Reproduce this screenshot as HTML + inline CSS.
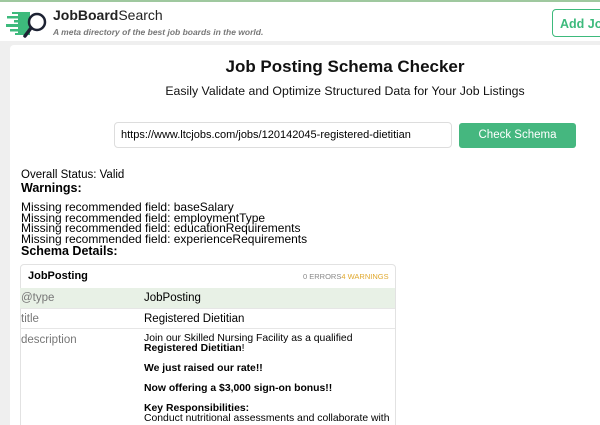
<!DOCTYPE html>
<html style="width:600px;height:425px;overflow:hidden"><head><style>
*{margin:0;padding:0;box-sizing:border-box}
body{width:600px;height:425px;overflow:hidden;background:#efefef;font-family:"Liberation Sans",sans-serif;position:relative;color:#000}
.abs{position:absolute;white-space:nowrap}
#hdr{position:absolute;left:0;top:0;width:600px;height:41px;background:#fff;border-top:2px solid #9fc89f}
#card{position:absolute;left:10px;top:45px;width:590px;height:380px;background:#fff;border-radius:4px 0 0 0}
.w{font-size:12px;line-height:10.5px}
.row{position:absolute;left:20px;width:375px;border-bottom:1px solid #e6e6e6;font-size:11.5px}
.row .k{position:absolute;left:1px;color:#777}
.row .v{position:absolute;left:124px}
</style></head><body>
<div id="hdr">
 <svg class="abs" style="left:4px;top:7px" width="46" height="30" viewBox="0 0 46 30">
  <g fill="#3dba7c"><rect x="8" y="3" width="10" height="2"/><rect x="3" y="7" width="16" height="2.5"/><rect x="10" y="11" width="9" height="2.5"/><rect x="2" y="15" width="17" height="3"/><rect x="6" y="20" width="14" height="2.5"/><rect x="11" y="24" width="6" height="2"/>
  <path d="M14 3 L26 3 L26 26 L14 26 Z"/></g>
  <circle cx="33" cy="13" r="8" fill="#fff" stroke="#1d2233" stroke-width="2.5"/>
  <path d="M27 19 L21 27" stroke="#1d2233" stroke-width="3.5" stroke-linecap="round"/>
 </svg>
 <div class="abs" style="left:53px;top:5px;font-size:14px;color:#222"><b>JobBoard</b>Search</div>
 <div class="abs" style="left:53px;top:25px;font-size:8.5px;font-style:italic;font-weight:bold;color:#777">A meta directory of the best job boards in the world.</div>
 <div class="abs" style="left:552px;top:7px;width:60px;height:28px;border:1px solid #3dba7c;border-radius:4px;color:#3dba7c;font-weight:bold;font-size:12.5px;padding:7px 0 0 7px">Add Jobs</div>
</div>
<div id="card"></div>
<div class="abs" style="left:0;width:690px;top:57px;text-align:center;font-size:17px;font-weight:bold;color:#111">Job Posting Schema Checker</div>
<div class="abs" style="left:0;width:690px;top:84px;text-align:center;font-size:12.3px;color:#111">Easily Validate and Optimize Structured Data for Your Job Listings</div>
<div class="abs" style="left:114px;top:122px;width:338px;height:26px;border:1px solid #ddd;border-radius:4px;font-size:11px;padding:6px 0 0 6px">https://www.ltcjobs.com/jobs/120142045-registered-dietitian</div>
<div class="abs" style="left:459px;top:123px;width:117px;height:25px;background:#45b77f;border-radius:3px;color:#fff;font-size:11.5px;text-align:center;line-height:25px">Check Schema</div>
<div class="abs" style="left:21px;top:169px;font-size:11.5px">Overall Status: Valid</div>
<div class="abs" style="left:21px;top:181px;font-size:12.5px;font-weight:bold">Warnings:</div>
<div class="abs w" style="left:21px;top:202px">Missing recommended field: baseSalary<br>Missing recommended field: employmentType<br>Missing recommended field: educationRequirements<br>Missing recommended field: experienceRequirements</div>
<div class="abs" style="left:21px;top:244px;font-size:12.5px;font-weight:bold">Schema Details:</div>
<div class="abs" style="left:20px;top:264px;width:376px;height:170px;border:1px solid #e2e2e2;border-radius:4px"></div>
<div class="abs" style="left:28px;top:270px;font-size:11px;font-weight:bold">JobPosting</div>
<div class="abs" style="left:303px;top:272px;font-size:7.5px;color:#888">0 ERRORS<span style="color:#e0a82e">4 WARNINGS</span></div>
<div class="row" style="top:288px;height:21px;background:#e8f1e6"><span class="k" style="top:4px">@type</span><span class="v" style="top:4px">JobPosting</span></div>
<div class="row" style="top:309px;height:20px"><span class="k" style="top:4px">title</span><span class="v" style="top:4px">Registered Dietitian</span></div>
<div class="row" style="top:329px;height:90px;border:0"><span class="k" style="top:5px">description</span>
<div class="v" style="top:5px;font-size:10.4px;line-height:10px;white-space:nowrap">Join our Skilled Nursing Facility as a qualified<br><b>Registered Dietitian</b>!<br><div style="height:10px"></div><b>We just raised our rate!!</b><br><div style="height:10px"></div><b>Now offering a $3,000 sign-on bonus!!</b><br><div style="height:10px"></div><b>Key Responsibilities:</b><br>Conduct nutritional assessments and collaborate with</div></div>
</body></html>
